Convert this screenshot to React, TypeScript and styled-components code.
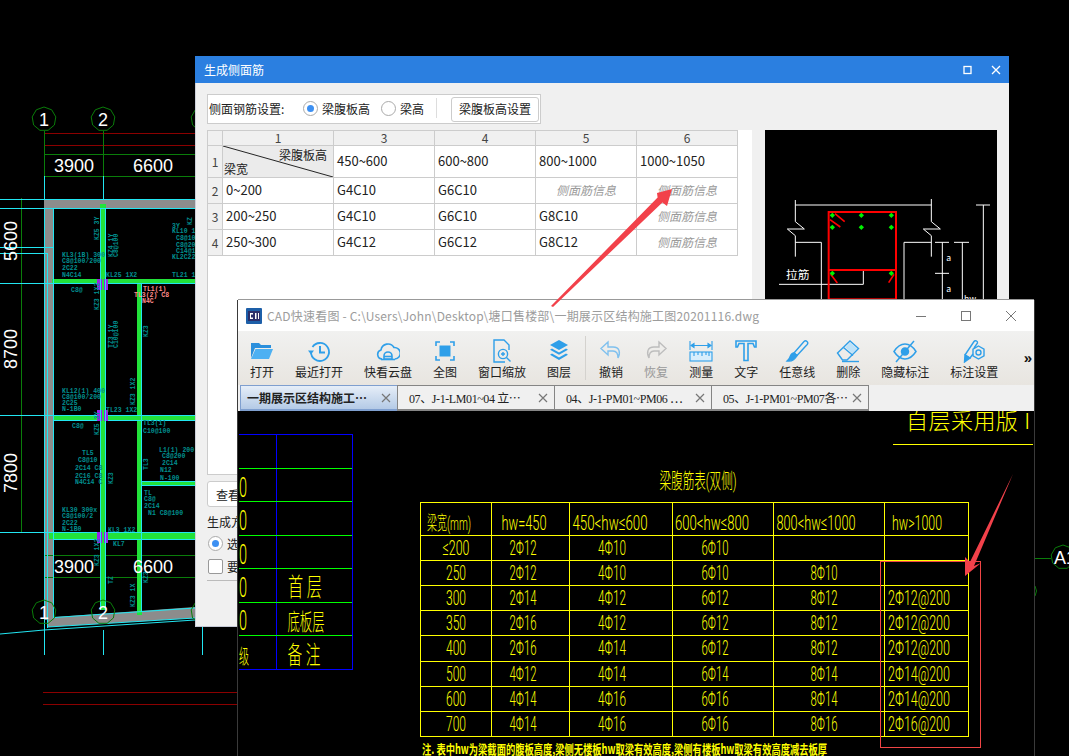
import React from "react";
import styled, { createGlobalStyle } from "styled-components";

const UI = `"Noto Sans CJK SC", "Liberation Sans", sans-serif`;
const CAD = `Roboto, "Noto Sans CJK SC", sans-serif`;

const Global = createGlobalStyle`
  html, body { margin: 0; padding: 0; background: #000; }
  body { font-family: ${UI}; }
`;

const Desktop = styled.div`
  position: relative;
  width: 1069px;
  height: 756px;
  overflow: hidden;
  background: #000;
`;
const PlanLayer = styled.svg`
  position: absolute;
  inset: 0;
  display: block;
`;
const ArrowLayer = styled.svg`
  position: absolute;
  inset: 0;
  display: block;
  pointer-events: none;
`;

/* Dialog */
const Dialog = styled.div`
  position: absolute;
  left: 195px;
  top: 56px;
  width: 814px;
  height: 571px;
  background: #f0f0f0;
  box-shadow: inset 1px 0 0 #cdd0da, inset 0 -1px 0 #c4c8d4;
  display: flex;
  flex-direction: column;
  font-size: 12px;
  color: #222;
`;
const DialogTitle = styled.div`
  height: 27px;
  flex: none;
  background: #2b7fe0;
  color: #fff;
  display: flex;
  align-items: center;
  padding: 0 8px 0 9px;
  gap: 18px;
  box-sizing: border-box;
`;
const TitleText = styled.span`
  flex: 1;
`;
const DialogBody = styled.div`
  flex: 1;
  display: flex;
  flex-direction: column;
  padding: 11px 12px 0;
  min-height: 0;
`;
const OptionBar = styled.div`
  width: 334px;
  height: 30px;
  box-sizing: border-box;
  background: #fff;
  border: 1px solid #ccc;
  display: flex;
  align-items: center;
  padding: 0 0 2px 1px;
  flex: none;
`;
const OptionLabel = styled.span`
  width: 94px;
  flex: none;
  white-space: nowrap;
`;
const Radio = styled.span<{ $on?: boolean }>`
  width: 15px;
  height: 15px;
  box-sizing: border-box;
  border-radius: 50%;
  background: #fff;
  border: 1px solid #aaa;
  display: inline-flex;
  align-items: center;
  justify-content: center;
  flex: none;
  &::after {
    content: "";
    width: 7px;
    height: 7px;
    border-radius: 50%;
    background: ${(p) => (p.$on ? "#3d90f2" : "transparent")};
  }
`;
const RadioText = styled.span<{ $gap: number }>`
  margin: 0 ${(p) => p.$gap}px 0 4px;
  white-space: nowrap;
`;
const BarDivider = styled.span`
  width: 1px;
  height: 20px;
  background: #ddd;
  margin-right: 14px;
`;
const PlainButton = styled.div`
  height: 25px;
  width: 88px;
  box-sizing: border-box;
  background: #fff;
  border: 1px solid #ccc;
  border-radius: 3px;
  display: flex;
  align-items: center;
  justify-content: center;
  white-space: nowrap;
  margin-top: 2px;
  padding-bottom: 1px;
`;
const MainRow = styled.div`
  display: flex;
  gap: 13px;
  margin-top: 6px;
  height: 345px;
  flex: none;
`;
const GridPanel = styled.div`
  width: 545px;
  box-sizing: border-box;
  background: #fff;
  border-bottom: 1px solid #ccc;
  border-left: 1px solid #ccc;
`;
const Grid = styled.table`
  border-collapse: collapse;
  table-layout: fixed;
  width: 530px;
  margin-left: -1px;
  font-size: 13px;
`;
const HeadCell = styled.th`
  height: 14px;
  padding: 0;
  line-height: 14px;
  font-size: 12px;
  font-weight: 400;
  background: #f0f0f0;
  border: 1px solid #ccc;
  color: #444;
  text-align: center;
`;
const RowHead = styled.td`
  padding: 0;
  font-size: 12px;
  background: #f0f0f0;
  border: 1px solid #ccc;
  text-align: center;
  color: #444;
`;
const Cell = styled.td<{ $tall?: boolean }>`
  height: ${(p) => (p.$tall ? 29 : 23)}px;
  padding: 0 0 2px 3px;
  border: 1px solid #ccc;
  color: #222;
  white-space: nowrap;
  background: #fff;
`;
const HintCell = styled(Cell)`
  padding: 0 0 2px;
  font-size: 12px;
  color: #9a9a9a;
  font-style: italic;
  text-align: center;
`;
const DiagonalCell = styled.td`
  padding: 0;
  font-size: 12px;
  border: 1px solid #ccc;
  background: #ebebeb;
`;
const DiagonalBox = styled.div`
  position: relative;
  height: 31px;
`;
const DiagonalLine = styled.svg`
  position: absolute;
  inset: 0;
  width: 100%;
  height: 100%;
`;
const DiagonalTop = styled.span`
  position: absolute;
  right: 6px;
  top: 0;
  line-height: 17px;
`;
const DiagonalBottom = styled.span`
  position: absolute;
  left: 1px;
  bottom: 0;
  line-height: 16px;
`;
const Preview = styled.div`
  width: 232px;
  background: #000;
  overflow: hidden;
`;
const PreviewArt = styled.svg`
  display: block;
`;
const LooseButton = styled.div`
  margin-top: 6px;
  width: 120px;
  height: 26px;
  box-sizing: border-box;
  background: #fff;
  border: 1px solid #ccc;
  border-radius: 3px;
  display: flex;
  align-items: center;
  padding-left: 8px;
  flex: none;
`;
const SectionLabel = styled.div`
  margin-top: 7px;
  line-height: 16px;
`;
const OptionRow = styled.div`
  display: flex;
  align-items: center;
  gap: 4px;
  height: 20px;
  margin-top: 3px;
  padding-left: 1px;
`;
const CheckBox = styled.span`
  width: 13px;
  height: 13px;
  border: 1px solid #999;
  border-radius: 2px;
  background: #fff;
  flex: none;
`;
const RuleLine = styled.div`
  height: 1px;
  background: #bbb;
  margin-top: 4px;
`;

/* CAD viewer window */
const Viewer = styled.div`
  position: absolute;
  left: 238px;
  top: 300px;
  width: 796px;
  height: 456px;
  display: flex;
  flex-direction: column;
  box-shadow: 0 -1px 0 #999, 1px 0 0 #3a3a3a, -1px 0 0 #3a3a3a;
  background: #000;
`;
const ViewerTitle = styled.div`
  height: 31px;
  flex: none;
  background: #fff;
  display: flex;
  align-items: center;
  padding-left: 8px;
  font-size: 12px;
  letter-spacing: 0.2px;
  color: #9c9c9c;
`;
const TitleLabel = styled.span`
  flex: 1;
  margin-left: 5px;
  white-space: nowrap;
`;
const WinControls = styled.div`
  display: flex;
  align-items: center;
  gap: 33px;
  padding-right: 17px;
`;
const Ribbon = styled.div`
  height: 54px;
  flex: none;
  box-sizing: border-box;
  background: linear-gradient(#f1f1f0, #e8e5e0);
  display: flex;
  align-items: stretch;
  gap: 21px;
  padding-left: 12px;
  position: relative;
`;
const RibbonItem = styled.div<{ $off?: boolean }>`
  display: flex;
  flex-direction: column;
  align-items: center;
  padding-top: 8px;
  font-size: 12px;
  line-height: 16px;
  color: ${(p) => (p.$off ? "#999" : "#222")};
  white-space: nowrap;
`;
const RibbonIcon = styled.svg`
  width: 24px;
  height: 24px;
  margin-bottom: 1px;
  display: block;
`;
const RibbonSep = styled.span`
  width: 1px;
  background: #d4d2ce;
  margin: 5px -8px 5px -7px;
`;
const More = styled.span`
  position: absolute;
  right: 2px;
  top: 19px;
  font-size: 15px;
  font-weight: 700;
  line-height: 15px;
  color: #111;
  font-family: "Liberation Sans", sans-serif;
`;
const TabBar = styled.div`
  height: 26px;
  flex: none;
  background: #f0f0f0;
  display: flex;
  padding-left: 2px;
`;
const Tab = styled.div<{ $active?: boolean }>`
  width: 158px;
  box-sizing: border-box;
  border: 1px solid ${(p) => (p.$active ? "#7f9fcf" : "#858585")};
  border-bottom-width: 2px;
  margin-left: ${(p) => (p.$active ? 0 : -1)}px;
  background: ${(p) =>
    p.$active ? "linear-gradient(#e6eef8, #b4cae6)" : "#f0f0f0"};
  font-family: "Liberation Serif", "Noto Sans CJK SC", serif;
  font-size: 12px;
  font-weight: ${(p) => (p.$active ? 700 : 400)};
  letter-spacing: ${(p) => (p.$active ? 0 : -0.4)}px;
  color: #222;
  display: flex;
  align-items: center;
  gap: 4px;
  padding: 0 6px 0 ${(p) => (p.$active ? 6 : 11)}px;
  white-space: nowrap;
`;
const TabText = styled.span`
  flex: 1;
  min-width: 0;
`;
const Canvas = styled.svg`
  display: block;
  flex: 1;
  width: 796px;
  height: 345px;
  background: #000;
`;
const CadLabel = styled.text`
  font-family: ${CAD};
  font-weight: 300;
  fill: #ffff00;
`;
const NoteLabel = styled.text`
  font-family: "Noto Sans CJK SC", sans-serif;
  font-weight: 700;
  fill: #ffff00;
`;
const PlanText = styled.text<{ $pink?: boolean }>`
  font-family: "Liberation Mono", monospace;
  font-weight: 700;
  font-size: 6.5px;
  fill: ${(p) => (p.$pink ? "#ff8a8a" : "#008f8f")};
`;
const DimText = styled.text`
  font-family: "Liberation Sans", sans-serif;
  font-size: 18px;
  fill: #fff;
`;
const ArtLabel = styled.text`
  font-family: ${UI};
  fill: #fff;
`;

const ICON = "#2f9fe9";

const icons: Record<string, React.ReactNode> = {
  open: (
    <>
      <path d="M1 4h8l2 2h10v3H5L1 19z" fill="#2b8fdc" />
      <path d="M5.5 10H23l-4 10H1z" fill="#4db0f2" />
    </>
  ),
  recent: (
    <g fill="none" stroke={ICON} strokeWidth="1.8">
      <path d="M5.5 8A9 9 0 1 1 4 13" />
      <path d="M1 11.5h6L4 15.5z" fill={ICON} stroke="none" />
      <path d="M13 7v6.5h5" strokeWidth="2" />
    </g>
  ),
  cloud: (
    <g fill="none" stroke={ICON} strokeWidth="1.6">
      <path d="M6 20a4.6 4.6 0 0 1-1-9 7 7 0 0 1 13-2.5 5.6 5.6 0 0 1 1 11.5" />
      <path d="M8 20v-3a4 4 0 0 1 8 0v3z" />
      <path d="M8 17.5h8" />
      <path d="M5 20.5h14" />
    </g>
  ),
  full: (
    <>
      <path d="M3 7V3h4M17 3h4v4M21 17v4h-4M7 21H3v-4" fill="none" stroke={ICON} strokeWidth="1.6" />
      <rect x="6.5" y="6.5" width="11" height="11" fill={ICON} />
    </>
  ),
  zoom: (
    <g fill="none" stroke={ICON} strokeWidth="1.4">
      <path d="M15 23H4V1h10l5 5v5" />
      <circle cx="13" cy="15" r="4.6" />
      <path d="M16.5 18.5l4 4M11 15h4M13 13v4" />
    </g>
  ),
  layers: (
    <g fill={ICON}>
      <path d="M12 1l9 5-9 5-9-5z" />
      <path d="M5 9.5l7 4 7-4 2 1.3-9 5-9-5z" />
      <path d="M5 14.5l7 4 7-4 2 1.3-9 5.2-9-5.2z" />
    </g>
  ),
  undo: (
    <path d="M9 3L2 9.5 9 16v-4h5c3 0 5 2 5 7 2.5-5 2-11-5-11H9z" fill="none" stroke="#7fc0ee" strokeWidth="1.4" />
  ),
  redo: (
    <path d="M15 3l7 6.5-7 6.5v-4h-5c-3 0-5 2-5 7-2.5-5-2-11 5-11h5z" fill="none" stroke="#bdbdbd" strokeWidth="1.4" />
  ),
  measure: (
    <g fill="none" stroke={ICON} strokeWidth="1.1">
      <path d="M1 2v9M23 2v9M2 6.5h20" />
      <path d="M2 6.5l3-2v4zM22 6.5l-3-2v4z" fill={ICON} />
      <rect x="1" y="13" width="22" height="9" fill="#d8eefc" />
      <path d="M5 13v4M9 13v3M13 13v4M17 13v3M20 13v4" />
    </g>
  ),
  text: (
    <path d="M2 2h20v6h-1.5l-1.5-3.5h-5v17h-4v-17H5L3.5 8H2z" fill="none" stroke={ICON} strokeWidth="1.6" />
  ),
  line: (
    <g fill="none" stroke={ICON} strokeWidth="1.4">
      <path d="M9 14L19 2.5a2.2 2.2 0 0 1 3.2 3L12 16.5z" />
      <path d="M9 14c-3 0-3.5 3-4.5 5-.4 1-1.5 2-2.5 3 3 .5 7.5-.5 10-5.5z" fill={ICON} />
    </g>
  ),
  erase: (
    <g fill="none" stroke={ICON} strokeWidth="1.4">
      <path d="M1.5 14L14 2l8.5 7.5L11 21H6.5z" />
      <path d="M7.5 8.5L17 16.5" />
      <path d="M14 3.5l7 6-4.5 5-7-6z" fill="#bde2f9" stroke="none" />
      <path d="M6 22.5h17" />
    </g>
  ),
  hide: (
    <g fill="none" stroke={ICON} strokeWidth="1.5">
      <path d="M1 12.5C4.5 7 8 5 12 5s7.5 2 11 7.5C19.5 18 16 20 12 20S4.5 18 1 12.5z" />
      <circle cx="12" cy="12.5" r="3.5" fill={ICON} />
      <path d="M21 2L3 23" />
    </g>
  ),
  setting: (
    <g fill="none" stroke={ICON} strokeWidth="1.4">
      <path d="M3 16L12 2.5c1-1.5 4-.5 3.5 1.5L12 9" />
      <path d="M2.5 23L3 16l5 3z" fill={ICON} />
      <path d="M3 16l5 3 3-4" />
      <path d="M16.5 7l5.5 3.2v6.600L16.5 20 11 16.800v-6.600z" />
      <circle cx="16.5" cy="13.5" r="2.5" />
    </g>
  ),
};

const ribbonItems: { key: string; label: string; off?: boolean }[] = [
  { key: "open", label: "打开" },
  { key: "recent", label: "最近打开" },
  { key: "cloud", label: "快看云盘" },
  { key: "full", label: "全图" },
  { key: "zoom", label: "窗口缩放" },
  { key: "layers", label: "图层" },
];
const ribbonItemsB: { key: string; label: string; off?: boolean }[] = [
  { key: "undo", label: "撤销" },
  { key: "redo", label: "恢复", off: true },
  { key: "measure", label: "测量" },
  { key: "text", label: "文字" },
  { key: "line", label: "任意线" },
  { key: "erase", label: "删除" },
  { key: "hide", label: "隐藏标注" },
  { key: "setting", label: "标注设置" },
];

const tabs = [
  { t: "一期展示区结构施工⋯", active: true },
  { t: "07、J-1-LM01~04 立⋯" },
  { t: "04、J-1-PM01~PM06 ⋯" },
  { t: "05、J-1-PM01~PM07各⋯" },
];

const TabClose = () => (
  <svg width="10" height="10" viewBox="0 0 10 10">
    <path d="M1 1l8 8M9 1l-8 8" stroke="#777" strokeWidth="1.2" />
  </svg>
);

const RibbonEntry = ({ item }: { item: { key: string; label: string; off?: boolean } }) => (
  <RibbonItem $off={item.off}>
    <RibbonIcon viewBox="0 0 24 24">{icons[item.key]}</RibbonIcon>
    {item.label}
  </RibbonItem>
);

/* Plan drawing */
const Bubble = ({ cx, cy, t, x }: { cx: number; cy: number; t: string; x?: number }) => {
  const pts = Array.from({ length: 9 }, (_, i) => {
    const a = (i / 9) * Math.PI * 2 - Math.PI / 2;
    return `${(cx + 12 * Math.cos(a)).toFixed(1)},${(cy + 12 * Math.sin(a)).toFixed(1)}`;
  }).join(" ");
  return (
    <>
      <polygon points={pts} fill="none" stroke="#0a7d0a" strokeWidth="1" />
      <DimText x={x ?? cx} y={cy + 7} textAnchor="middle">
        {t}
      </DimText>
    </>
  );
};

const H = (x1: number, x2: number, y: number, c: string) => (
  <line key={`h${x1}-${x2}-${y}-${c}`} x1={x1} x2={x2} y1={y + 0.5} y2={y + 0.5} stroke={c} shapeRendering="crispEdges" />
);
const V = (x: number, y1: number, y2: number, c: string) => (
  <line key={`v${x}-${y1}-${y2}-${c}`} x1={x + 0.5} x2={x + 0.5} y1={y1} y2={y2} stroke={c} shapeRendering="crispEdges" />
);

const planNotes: { x: number; y: number; t: string; r?: boolean; c?: boolean }[] = [
  { x: 99, y: 240, t: "KZ5 3Y", r: true },
  { x: 113, y: 257, t: "KZ4 1Y", r: true },
  { x: 118, y: 257, t: "C8@100", r: true },
  { x: 62, y: 257, t: "KL3(1B) 300" },
  { x: 62, y: 263, t: "C8@100/200" },
  { x: 62, y: 270, t: "2C22" },
  { x: 62, y: 277, t: "N4C14" },
  { x: 106, y: 277, t: "KL25 1X2" },
  { x: 172, y: 277, t: "TL21 1X2" },
  { x: 71, y: 292, t: "C8@" },
  { x: 99, y: 310, t: "KZ3 1X2", r: true },
  { x: 113, y: 348, t: "TZ3 1Y", r: true },
  { x: 118, y: 348, t: "C10@100", r: true },
  { x: 135, y: 405, t: "KZ3 1X2", r: true },
  { x: 148, y: 337, t: "KZ3", r: true },
  { x: 172, y: 233, t: "KL10 1Y" },
  { x: 176, y: 240, t: "C8@100" },
  { x: 176, y: 247, t: "C8@200" },
  { x: 176, y: 253, t: "C14@10" },
  { x: 172, y: 259, t: "KL2C22" },
  { x: 172, y: 228, t: "3Y" },
  { x: 192, y: 225, t: "KZ", r: true },
  { x: 143, y: 291, t: "TL1(1)", c: true },
  { x: 134, y: 297, t: "TL3(2) C8", c: true },
  { x: 142, y: 303, t: "N4C", c: true },
  { x: 62, y: 393, t: "KL12(1) 400" },
  { x: 62, y: 399, t: "C8@100/200" },
  { x: 62, y: 405, t: "2C25" },
  { x: 62, y: 411, t: "N-1B0" },
  { x: 106, y: 412, t: "TL23 1X2" },
  { x: 72, y: 428, t: "C8@" },
  { x: 143, y: 425, t: "TL3(1)" },
  { x: 143, y: 433, t: "C10@100" },
  { x: 99, y: 435, t: "KZ5 3Y", r: true },
  { x: 159, y: 452, t: "L1(1) 200" },
  { x: 162, y: 458, t: "C8@200" },
  { x: 162, y: 465, t: "2C14" },
  { x: 160, y: 472, t: "N12" },
  { x: 160, y: 480, t: "N-100" },
  { x: 82, y: 455, t: "TL5" },
  { x: 78, y: 462, t: "C8@10" },
  { x: 75, y: 470, t: "2C14 C8" },
  { x: 75, y: 478, t: "2C16 C8" },
  { x: 75, y: 484, t: "N4C14 C" },
  { x: 113, y: 484, t: "KZ3", r: true },
  { x: 148, y: 470, t: "TL3", r: true },
  { x: 62, y: 512, t: "KL30 300x" },
  { x: 62, y: 518, t: "C8@100/2" },
  { x: 62, y: 525, t: "2C22" },
  { x: 62, y: 531, t: "N-1B0" },
  { x: 108, y: 532, t: "KL3 1X2" },
  { x: 144, y: 495, t: "TL" },
  { x: 144, y: 501, t: "C8@" },
  { x: 144, y: 508, t: "2C14" },
  { x: 148, y: 515, t: "N1 C8@100" },
  { x: 113, y: 546, t: "KL7" },
  { x: 99, y: 566, t: "KZ3 1X2", r: true },
  { x: 113, y: 584, t: "TZ", r: true },
  { x: 135, y: 607, t: "KZ3 1X", r: true },
  { x: 148, y: 583, t: "KZ3", r: true },
];

const PurpleMark = ({ y }: { y: number }) => (
  <>
    <rect x="97" y={y} width="11" height="11" fill="#9a1fe8" />
    <rect x="100" y={y} width="1" height="11" fill="#22e6f2" />
    <rect x="102" y={y} width="2" height="11" fill="#22e23a" />
    <rect x="105" y={y} width="1" height="11" fill="#22e6f2" />
  </>
);

const Plan = () => (
  <PlanLayer width="1069" height="756" viewBox="0 0 1069 756">
    <rect x="44" y="199" width="151" height="9" fill="#8c8c8c" />
    <rect x="45" y="208" width="9" height="412" fill="#8c8c8c" />
    <polygon points="48,617.5 195,607 195,618 48,627" fill="#8c8c8c" />

    {H(44, 195, 133, "#8b0000")}
    {H(44, 195, 145, "#8b0000")}
    {H(43, 238, 692, "#8b0000")}
    {H(43, 238, 704, "#8b0000")}
    {H(44, 195, 154, "#0a7d0a")}
    {H(44, 195, 176, "#0a7d0a")}
    {V(44, 131, 182, "#0a7d0a")}
    {V(103, 131, 182, "#0a7d0a")}
    {H(44, 195, 555, "#0a7d0a")}
    {H(44, 195, 577, "#0a7d0a")}
    {V(21, 198, 532, "#0a7d0a")}
    {H(0, 24, 199, "#0a7d0a")}
    {H(0, 24, 532, "#0a7d0a")}
    {H(1035, 1051, 558, "#0a7d0a")}
    <path d="M1035 586Q1038 591 1035 596" fill="none" stroke="#0a7d0a" />

    {/* green beams and columns */}
    <rect x="52" y="279" width="143" height="5" fill="#22e23a" />
    <rect x="53" y="415" width="142" height="5" fill="#22e23a" />
    <rect x="49" y="533" width="146" height="6" fill="#22e23a" />
    <rect x="142" y="482" width="53" height="3" fill="#22e23a" />
    <rect x="100" y="204" width="6" height="406" fill="#22e23a" />
    <rect x="137" y="283" width="5" height="332" fill="#22e23a" />

    {/* cyan outlines */}
    {V(44, 176, 199, "#22e6f2")}
    {V(103, 176, 199, "#22e6f2")}
    {H(0, 195, 199, "#22e6f2")}
    {H(0, 195, 208, "#22e6f2")}
    {H(0, 195, 283, "#22e6f2")}
    {H(0, 53, 247, "#22e6f2")}
    {H(0, 47, 253, "#22e6f2")}
    {H(0, 195, 415, "#22e6f2")}
    {H(53, 195, 420, "#22e6f2")}
    {H(0, 195, 532, "#22e6f2")}
    {H(53, 195, 539, "#22e6f2")}
    {H(142, 195, 481, "#22e6f2")}
    {H(142, 195, 485, "#22e6f2")}
    {V(44, 208, 655, "#22e6f2")}
    {V(47, 253, 628, "#22e6f2")}
    {V(53, 208, 618, "#22e6f2")}
    {V(100, 208, 610, "#22e6f2")}
    {V(103, 630, 655, "#22e6f2")}
    {V(105, 208, 610, "#22e6f2")}
    {V(141, 283, 612, "#22e6f2")}
    {V(202, 620, 655, "#22e6f2")}
    <polyline points="54,617.5 195,608" fill="none" stroke="#22e6f2" />
    <polyline points="48,627 195,618" fill="none" stroke="#22e6f2" />
    <polyline points="0,634 44,630 195,620" fill="none" stroke="#22e6f2" />

    <PurpleMark y={279} />
    <PurpleMark y={410} />
    <PurpleMark y={532} />

    {planNotes.map((n) => (
      <PlanText
        key={`${n.x}-${n.y}-${n.t}`}
        x={n.x}
        y={n.y}
        $pink={n.c}
        transform={n.r ? `rotate(-90 ${n.x} ${n.y})` : undefined}
      >
        {n.t}
      </PlanText>
    ))}

    <Bubble cx={44} cy={119} t="1" />
    <Bubble cx={103} cy={119} t="2" />
    <Bubble cx={203} cy={119} t="3" />
    <Bubble cx={44} cy={612} t="1" />
    <Bubble cx={103} cy={612} t="2" />
    <Bubble cx={203} cy={612} t="3" />
    <Bubble cx={1063} cy={557} t="A1" x={1065} />

    <DimText x={74} y={172} textAnchor="middle">3900</DimText>
    <DimText x={153} y={172} textAnchor="middle">6600</DimText>
    <DimText x={74} y={573} textAnchor="middle">3900</DimText>
    <DimText x={153} y={573} textAnchor="middle">6600</DimText>
    <DimText x={17} y={241} textAnchor="middle" transform="rotate(-90 17 241)">5600</DimText>
    <DimText x={17} y={349} textAnchor="middle" transform="rotate(-90 17 349)">8700</DimText>
    <DimText x={17} y={473} textAnchor="middle" transform="rotate(-90 17 473)">7800</DimText>
  </PlanLayer>
);

/* Yellow drawing in viewer */
const YT = ({ x, y, w, s = 21, children }: { x: number; y: number; w: number; s?: number; children: React.ReactNode }) => (
  <CadLabel x={x} y={y} fontSize={s} textAnchor="middle" textLength={w} lengthAdjust="spacingAndGlyphs">
    {children}
  </CadLabel>
);

const rowY = [535, 560, 585, 610, 635, 661, 686, 711, 736];
const colX = [420, 491, 569, 672, 773, 884, 968];
const beamRows: string[][] = [
  ["≤200", "2Φ12", "4Φ10", "6Φ10", "", ""],
  ["250", "2Φ12", "4Φ10", "6Φ10", "8Φ10", ""],
  ["300", "2Φ14", "4Φ12", "6Φ12", "8Φ12", "2Φ12@200"],
  ["350", "2Φ16", "4Φ12", "6Φ12", "8Φ12", "2Φ12@200"],
  ["400", "2Φ16", "4Φ14", "6Φ12", "8Φ12", "2Φ12@200"],
  ["500", "4Φ12", "4Φ14", "6Φ14", "8Φ14", "2Φ14@200"],
  ["600", "4Φ14", "4Φ16", "6Φ16", "8Φ14", "2Φ14@200"],
  ["700", "4Φ14", "4Φ16", "6Φ16", "8Φ16", "2Φ16@200"],
];
const colCenter = [456, 523, 612, 715, 824, 919];
const colWidth = [20, 27, 28, 27, 27, 62];

const CadCanvas = () => (
  <Canvas viewBox="238 411 796 345">
    {/* blue schedule */}
    <path d="M239 434.5H352.5V669.5H239M276.5 434V669" fill="none" stroke="#0000ff" shapeRendering="crispEdges" />
    {[468, 501, 535, 568, 602, 635].map((y) => (
      <React.Fragment key={y}>{H(239, 352, y, "#00ff00")}</React.Fragment>
    ))}
    {[497, 530, 564, 597, 630].map((y) => (
      <YT key={y} x={243} y={y} w={8} s={27}>0</YT>
    ))}
    <YT x={305} y={596} w={34} s={25}>首 层</YT>
    <YT x={306} y={630} w={37} s={23}>底板层</YT>
    <YT x={304} y={664} w={33} s={25}>备 注</YT>
    <YT x={244} y={664} w={10} s={20}>级</YT>

    {/* heading */}
    <CadLabel x={906} y={429} fontSize={22} textLength={124} lengthAdjust="spacing">自层采用版 I</CadLabel>
    {H(893, 1033, 444, "#ffff00")}
    <YT x={698} y={488} w={77} s={21}>梁腹筋表(双侧)</YT>

    {/* beam table */}
    {[502, ...rowY].map((y) => (
      <React.Fragment key={y}>{H(420, 968, y, "#ffff00")}</React.Fragment>
    ))}
    {colX.map((x) => (
      <React.Fragment key={x}>{V(x, 502, 737, "#ffff00")}</React.Fragment>
    ))}
    <YT x={449} y={530} w={44} s={19}>梁宽(mm)</YT>
    <YT x={524} y={530} w={45}>hw=450</YT>
    <YT x={610} y={530} w={75}>450&lt;hw≤600</YT>
    <YT x={712} y={530} w={74}>600&lt;hw≤800</YT>
    <YT x={816} y={530} w={79}>800&lt;hw≤1000</YT>
    <YT x={917} y={530} w={50}>hw&gt;1000</YT>
    {beamRows.map((row, i) =>
      row.map((t, j) =>
        t ? (
          <YT key={`${i}-${j}`} x={colCenter[j]} y={rowY[i] + 20} w={t.startsWith("≤") ? 27 : colWidth[j]}>
            {t}
          </YT>
        ) : null
      )
    )}
    <NoteLabel x={422} y={754} fontSize={13} textLength={405} lengthAdjust="spacingAndGlyphs">
      注. 表中hw为梁截面的腹板高度,梁侧无楼板hw取梁有效高度,梁侧有楼板hw取梁有效高度减去板厚
    </NoteLabel>
    <rect x="880.5" y="561.5" width="100" height="186" fill="none" stroke="#f04545" shapeRendering="crispEdges" />
  </Canvas>
);

const PreviewDrawing = () => (
  <PreviewArt width="232" height="180" viewBox="15 15 696 540">
    <g fill="none" stroke="#fff" strokeWidth="3">
      <path d="M106 225V290L133 312H82L106 332V395" />
      <path d="M514 222V290L541 312H490L514 332V395" />
      <path d="M106 240H514" />
      <path d="M106 352H184V530M432 530V352H514" />
      <path d="M57 478H310V435" />
      <path d="M547 352V530M525 352H567M525 445H567" />
      <path d="M607 352V530M582 352H627" />
      <path d="M670 240V530M648 240H690" />
    </g>
    <g fill="none" stroke="#f00" strokeWidth="6">
      <rect x="206" y="261" width="202" height="262" />
      <path d="M206 435H408" />
      <path d="M225 266L254 290M210 284L241 306M212 448L232 474M402 448L386 473" strokeWidth="5" />
    </g>
    <g fill="#00f000">
      {[
        [217, 271],
        [304, 271],
        [394, 271],
        [217, 307],
        [304, 307],
        [394, 307],
        [217, 445],
        [394, 445],
      ].map(([x, y]) => (
        <path key={`${x}-${y}`} d={`M${x - 8} ${y}L${x} ${y - 8}L${x + 8} ${y}L${x} ${y + 8}z`} />
      ))}
    </g>
    <ArtLabel x={78} y={463} fontSize={35}>拉筋</ArtLabel>
    <ArtLabel x={559} y={408} fontSize={26}>a</ArtLabel>
    <ArtLabel x={559} y={502} fontSize={26}>a</ArtLabel>
    <ArtLabel x={612} y={530} fontSize={26}>hw</ArtLabel>
  </PreviewArt>
);

const gridRows: { head: string; w: string; cells: string[] }[] = [
  { head: "2", w: "0~200", cells: ["G4C10", "G6C10", "", ""] },
  { head: "3", w: "200~250", cells: ["G4C10", "G6C10", "G8C10", ""] },
  { head: "4", w: "250~300", cells: ["G4C12", "G6C12", "G8C12", ""] },
];

export default function App() {
  return (
    <Desktop>
      <Global />
      <Plan />
      <Dialog>
        <DialogTitle>
          <TitleText>生成侧面筋</TitleText>
          <svg width="10" height="10" viewBox="0 0 10 10">
            <rect x="1" y="1.5" width="7" height="7" fill="none" stroke="#fff" strokeWidth="1.3" />
          </svg>
          <svg width="10" height="10" viewBox="0 0 10 10">
            <path d="M1 1l8 8M9 1l-8 8" stroke="#fff" strokeWidth="1.3" />
          </svg>
        </DialogTitle>
        <DialogBody>
          <OptionBar>
            <OptionLabel>侧面钢筋设置:</OptionLabel>
            <Radio $on />
            <RadioText $gap={11}>梁腹板高</RadioText>
            <Radio />
            <RadioText $gap={12}>梁高</RadioText>
            <BarDivider />
            <PlainButton>梁腹板高设置</PlainButton>
          </OptionBar>
          <MainRow>
            <GridPanel>
              <Grid>
                <colgroup>
                  <col width="15" />
                  <col width="111" />
                  <col width="101" />
                  <col width="101" />
                  <col width="101" />
                  <col width="101" />
                </colgroup>
                <thead>
                  <tr>
                    <HeadCell />
                    {["1", "3", "4", "5", "6"].map((h) => (
                      <HeadCell key={h}>{h}</HeadCell>
                    ))}
                  </tr>
                </thead>
                <tbody>
                  <tr>
                    <RowHead>1</RowHead>
                    <DiagonalCell>
                      <DiagonalBox>
                        <DiagonalLine viewBox="0 0 111 31" preserveAspectRatio="none">
                          <path d="M0 0L111 31" stroke="#222" strokeWidth="1" />
                        </DiagonalLine>
                        <DiagonalTop>梁腹板高</DiagonalTop>
                        <DiagonalBottom>梁宽</DiagonalBottom>
                      </DiagonalBox>
                    </DiagonalCell>
                    {["450~600", "600~800", "800~1000", "1000~1050"].map((t) => (
                      <Cell key={t} $tall>{t}</Cell>
                    ))}
                  </tr>
                  {gridRows.map((r) => (
                    <tr key={r.head}>
                      <RowHead>{r.head}</RowHead>
                      <Cell>{r.w}</Cell>
                      {r.cells.map((c, i) =>
                        c ? (
                          <Cell key={i}>{c}</Cell>
                        ) : (
                          <HintCell key={i}>侧面筋信息</HintCell>
                        )
                      )}
                    </tr>
                  ))}
                </tbody>
              </Grid>
            </GridPanel>
            <Preview>
              <PreviewDrawing />
            </Preview>
          </MainRow>
          <LooseButton>查看计算规则</LooseButton>
          <SectionLabel>生成方式</SectionLabel>
          <OptionRow>
            <Radio $on />
            <span>选择图元</span>
          </OptionRow>
          <OptionRow>
            <CheckBox />
            <span>要覆盖同位置钢筋</span>
          </OptionRow>
          <RuleLine />
        </DialogBody>
      </Dialog>

      <Viewer>
        <ViewerTitle>
          <svg width="16" height="16" viewBox="0 0 16 16">
            <rect width="16" height="16" rx="1" fill="#1d5fa8" />
            <rect x="2" y="3" width="12" height="10" fill="#2b2f6b" />
            <path d="M4 5H7V6.5H5V9.5H7V11H4zM9 5h1.5V11H9zM12 5h1V11h-1z" fill="#fff" />
          </svg>
          <TitleLabel>CAD快速看图 - C:\Users\John\Desktop\塘口售楼部\一期展示区结构施工图20201116.dwg</TitleLabel>
          <WinControls>
            <svg width="12" height="12" viewBox="0 0 12 12">
              <path d="M1 6.5H11" stroke="#777" />
            </svg>
            <svg width="12" height="12" viewBox="0 0 12 12">
              <rect x="1.5" y="1.5" width="9" height="9" fill="none" stroke="#777" />
            </svg>
            <svg width="12" height="12" viewBox="0 0 12 12">
              <path d="M1 1l10 10M11 1L1 11" stroke="#777" />
            </svg>
          </WinControls>
        </ViewerTitle>
        <Ribbon>
          {ribbonItems.map((it) => (
            <RibbonEntry key={it.key} item={it} />
          ))}
          <RibbonSep />
          {ribbonItemsB.map((it) => (
            <RibbonEntry key={it.key} item={it} />
          ))}
          <More>»</More>
        </Ribbon>
        <TabBar>
          {tabs.map((t) => (
            <Tab key={t.t} $active={t.active}>
              <TabText>{t.t}</TabText>
              <TabClose />
            </Tab>
          ))}
        </TabBar>
        <CadCanvas />
      </Viewer>

      <ArrowLayer width="1069" height="756" viewBox="0 0 1069 756">
        <polygon points="551,306 657.6,197.5 657,193 672,189 667,206 662.4,202.5 553,307" fill="#f2414a" />
        <polygon points="1013,474 974,566 981,563 965,576 965,557 970,562" fill="#f2414a" />
      </ArrowLayer>
    </Desktop>
  );
}
